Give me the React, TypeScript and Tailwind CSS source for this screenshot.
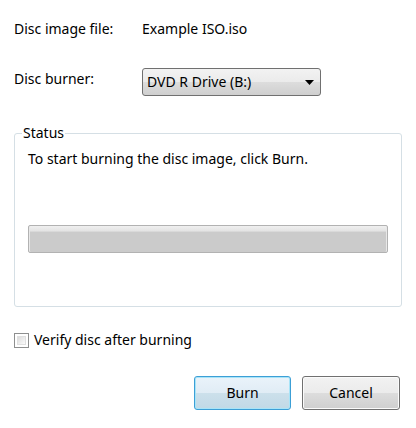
const font = { fontFamily: '"Noto Sans", "Open Sans", sans-serif' };

const App = () => {
  return (
    <div
      className="w-[416px] h-[428px] bg-white text-[14px] leading-5 text-black flex flex-col px-[14px]"
      style={font}
    >
      <div className="flex items-center mt-[19px] h-5">
        <span className="w-[128px]">Disc image file:</span>
        <span>Example ISO.iso</span>
      </div>

      <div className="flex items-center mt-[29px]">
        <span className="w-[128px] -mt-[6px]">Disc burner:</span>
        <div className="w-[179px] h-[28px] border border-[#707070] rounded-[3px] flex items-center justify-between pl-[4px] pr-[6px] bg-[linear-gradient(#f2f2f2_0%,#ebebeb_50%,#dddddd_50%,#cfcfcf_100%)]">
          <span>DVD R Drive (B:)</span>
          <svg width="9" height="5" viewBox="0 0 9 5">
            <polygon points="0,0 9,0 4.5,5" fill="#000" />
          </svg>
        </div>
      </div>

      <fieldset className="mt-[27px] border border-[#d5dfe5] rounded-[3px] h-[184px] px-[13px] pb-0 m-0">
        <legend className="px-[1px] -ml-[6px] leading-5">Status</legend>
        <p className="mt-[6px]">To start burning the disc image, click Burn.</p>
        <div className="mt-[56px] h-[28px] border border-[#b2b2b2] rounded-[2px] bg-[linear-gradient(#f0f0f0_0%,#e4e4e4_18%,#cbcbcb_25%,#cbcbcb_100%)] shadow-[inset_1px_0_0_#e8e8e8,inset_-1px_0_0_#e8e8e8]" />
      </fieldset>

      <label className="flex items-center gap-[5px] mt-[23px]">
        <span className="w-[15px] h-[15px] border border-[#8e8f8f] bg-white p-[2px] flex">
          <span className="flex-1 bg-[linear-gradient(135deg,#dcdcdc,#fbfbfb)] border border-[#e0e0e0]" />
        </span>
        <span>Verify disc after burning</span>
      </label>

      <div className="flex justify-end gap-[11px] mt-[26px] pr-[2px]">
        <button className="w-[97px] h-[34px] border border-[#3c9fd6] rounded-[3px] shadow-[inset_0_0_0_1px_#a8e4f8] bg-[linear-gradient(#eaf3fa_0%,#e0ecf5_50%,#cce0eb_50%,#c1d9e6_100%)]">
          Burn
        </button>
        <button className="w-[98px] h-[34px] border border-[#707070] rounded-[3px] shadow-[inset_0_0_0_1px_#fbfbfb] bg-[linear-gradient(#f2f2f2_0%,#ebebeb_50%,#dddddd_50%,#cfcfcf_100%)]">
          Cancel
        </button>
      </div>
    </div>
  );
};

export default App;
